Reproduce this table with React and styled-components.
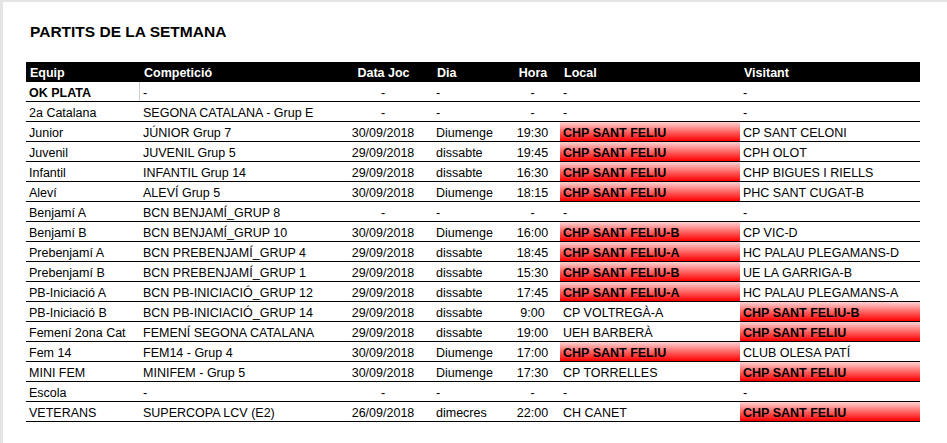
import React from "react";
import styled, { createGlobalStyle } from "styled-components";

const GlobalStyle = createGlobalStyle`
  html, body {
    margin: 0;
    padding: 0;
    background: #ffffff;
  }
  body {
    font-family: "Liberation Sans", Arial, sans-serif;
    color: #000;
  }
`;

const COLS = "114px 193px 100px 72px 55px 180px 180px";

const rows = [
  { equip: "OK PLATA", bold: true, comp: "-", data: "-", dia: "-", hora: "-", local: "-", visitant: "-" },
  { equip: "2a Catalana", comp: "SEGONA CATALANA - Grup E", data: "-", dia: "-", hora: "-", local: "-", visitant: "-" },
  { equip: "Junior", comp: "JÚNIOR Grup 7", data: "30/09/2018", dia: "Diumenge", hora: "19:30", local: "CHP SANT FELIU", visitant: "CP SANT CELONI", home: true },
  { equip: "Juvenil", comp: "JUVENIL Grup 5", data: "29/09/2018", dia: "dissabte", hora: "19:45", local: "CHP SANT FELIU", visitant: "CPH OLOT", home: true },
  { equip: "Infantil", comp: "INFANTIL Grup 14", data: "29/09/2018", dia: "dissabte", hora: "16:30", local: "CHP SANT FELIU", visitant: "CHP BIGUES I RIELLS", home: true },
  { equip: "Aleví", comp: "ALEVÍ Grup 5", data: "30/09/2018", dia: "Diumenge", hora: "18:15", local: "CHP SANT FELIU", visitant: "PHC SANT CUGAT-B", home: true },
  { equip: "Benjamí A", comp: "BCN BENJAMÍ_GRUP 8", data: "-", dia: "-", hora: "-", local: "-", visitant: "-" },
  { equip: "Benjamí B", comp: "BCN BENJAMÍ_GRUP 10", data: "30/09/2018", dia: "Diumenge", hora: "16:00", local: "CHP SANT FELIU-B", visitant: "CP VIC-D", home: true },
  { equip: "Prebenjamí A", comp: "BCN PREBENJAMÍ_GRUP 4", data: "29/09/2018", dia: "dissabte", hora: "18:45", local: "CHP SANT FELIU-A", visitant: "HC PALAU PLEGAMANS-D", home: true },
  { equip: "Prebenjamí B", comp: "BCN PREBENJAMÍ_GRUP 1", data: "29/09/2018", dia: "dissabte", hora: "15:30", local: "CHP SANT FELIU-B", visitant: "UE LA GARRIGA-B", home: true },
  { equip: "PB-Iniciació A", comp: "BCN PB-INICIACIÓ_GRUP 12", data: "29/09/2018", dia: "dissabte", hora: "17:45", local: "CHP SANT FELIU-A", visitant: "HC PALAU PLEGAMANS-A", home: true },
  { equip: "PB-Iniciació B", comp: "BCN PB-INICIACIÓ_GRUP 14", data: "29/09/2018", dia: "dissabte", hora: "9:00", local: "CP VOLTREGÀ-A", visitant: "CHP SANT FELIU-B", away: true },
  { equip: "Femení 2ona Cat", comp: "FEMENÍ SEGONA CATALANA", data: "29/09/2018", dia: "dissabte", hora: "19:00", local: "UEH BARBERÀ", visitant: "CHP SANT FELIU", away: true },
  { equip: "Fem 14", comp: "FEM14 - Grup 4", data: "30/09/2018", dia: "Diumenge", hora: "17:00", local: "CHP SANT FELIU", visitant: "CLUB OLESA PATÍ", home: true },
  { equip: "MINI FEM", comp: "MINIFEM - Grup 5", data: "30/09/2018", dia: "Diumenge", hora: "17:30", local: "CP TORRELLES", visitant: "CHP SANT FELIU", away: true },
  { equip: "Escola", comp: "-", data: "-", dia: "-", hora: "-", local: "-", visitant: "-" },
  { equip: "VETERANS", comp: "SUPERCOPA LCV (E2)", data: "26/09/2018", dia: "dimecres", hora: "22:00", local: "CH CANET", visitant: "CHP SANT FELIU", away: true },
];

const App = () => {
  return (
    <>
      <GlobalStyle />
      <Sheet>
        <Title>PARTITS DE LA SETMANA</Title>
        <Table>
          <HeadRow>
            <HeadCell>Equip</HeadCell>
            <HeadCell>Competició</HeadCell>
            <HeadCell $align="center">Data Joc</HeadCell>
            <HeadCell>Dia</HeadCell>
            <HeadCell $align="center">Hora</HeadCell>
            <HeadCell>Local</HeadCell>
            <HeadCell>Visitant</HeadCell>
          </HeadRow>
          {rows.map((r, i) => (
            <Row key={i}>
              <Cell $bold={r.bold} $divider={i === 0}>{r.equip}</Cell>
              <Cell>{r.comp}</Cell>
              <Cell $align="center">{r.data}</Cell>
              <Cell>{r.dia}</Cell>
              <Cell $align="center">{r.hora}</Cell>
              {r.home ? <TeamCell>{r.local}</TeamCell> : <Cell>{r.local}</Cell>}
              {r.away ? <TeamCell>{r.visitant}</TeamCell> : <Cell>{r.visitant}</Cell>}
            </Row>
          ))}
        </Table>
      </Sheet>
    </>
  );
};

const Sheet = styled.div`
  box-sizing: border-box;
  width: 947px;
  height: 443px;
  border-top: 2px solid #e4e4e4;
  border-left: 3px solid #e4e4e4;
  padding: 18px 0 0 23px;
`;

const Title = styled.div`
  padding-left: 4px;
  height: 24px;
  line-height: 24px;
  font-size: 15.5px;
  font-weight: bold;
  margin-bottom: 18px;
`;

const Table = styled.div`
  display: flex;
  flex-direction: column;
  width: 894px;
`;

const HeadRow = styled.div`
  display: grid;
  grid-template-columns: ${COLS};
  height: 20px;
  background: #000;
`;

const HeadCell = styled.div`
  color: #fff;
  font-weight: bold;
  font-size: 12.5px;
  line-height: 20px;
  padding: 1px 3px 0 4px;
  text-align: ${(p) => p.$align || "left"};
  white-space: nowrap;
`;

const Row = styled.div`
  display: grid;
  grid-template-columns: ${COLS};
  height: 19px;
  border-bottom: 1px solid #000;
`;

const Cell = styled.div`
  box-sizing: border-box;
  height: 19px;
  font-size: 12.5px;
  line-height: 19px;
  padding: 2px 3px 0 3px;
  font-weight: ${(p) => (p.$bold ? "bold" : "normal")};
  text-align: ${(p) => p.$align || "left"};
  white-space: nowrap;
  border-right: ${(p) => (p.$divider ? "1px solid #cfcfcf" : "none")};
`;

const TeamCell = styled(Cell)`
  font-weight: bold;
  background: linear-gradient(to bottom, #ffd2d2 0%, #ff5c5c 55%, #ff0000 100%);
`;

export default App;
